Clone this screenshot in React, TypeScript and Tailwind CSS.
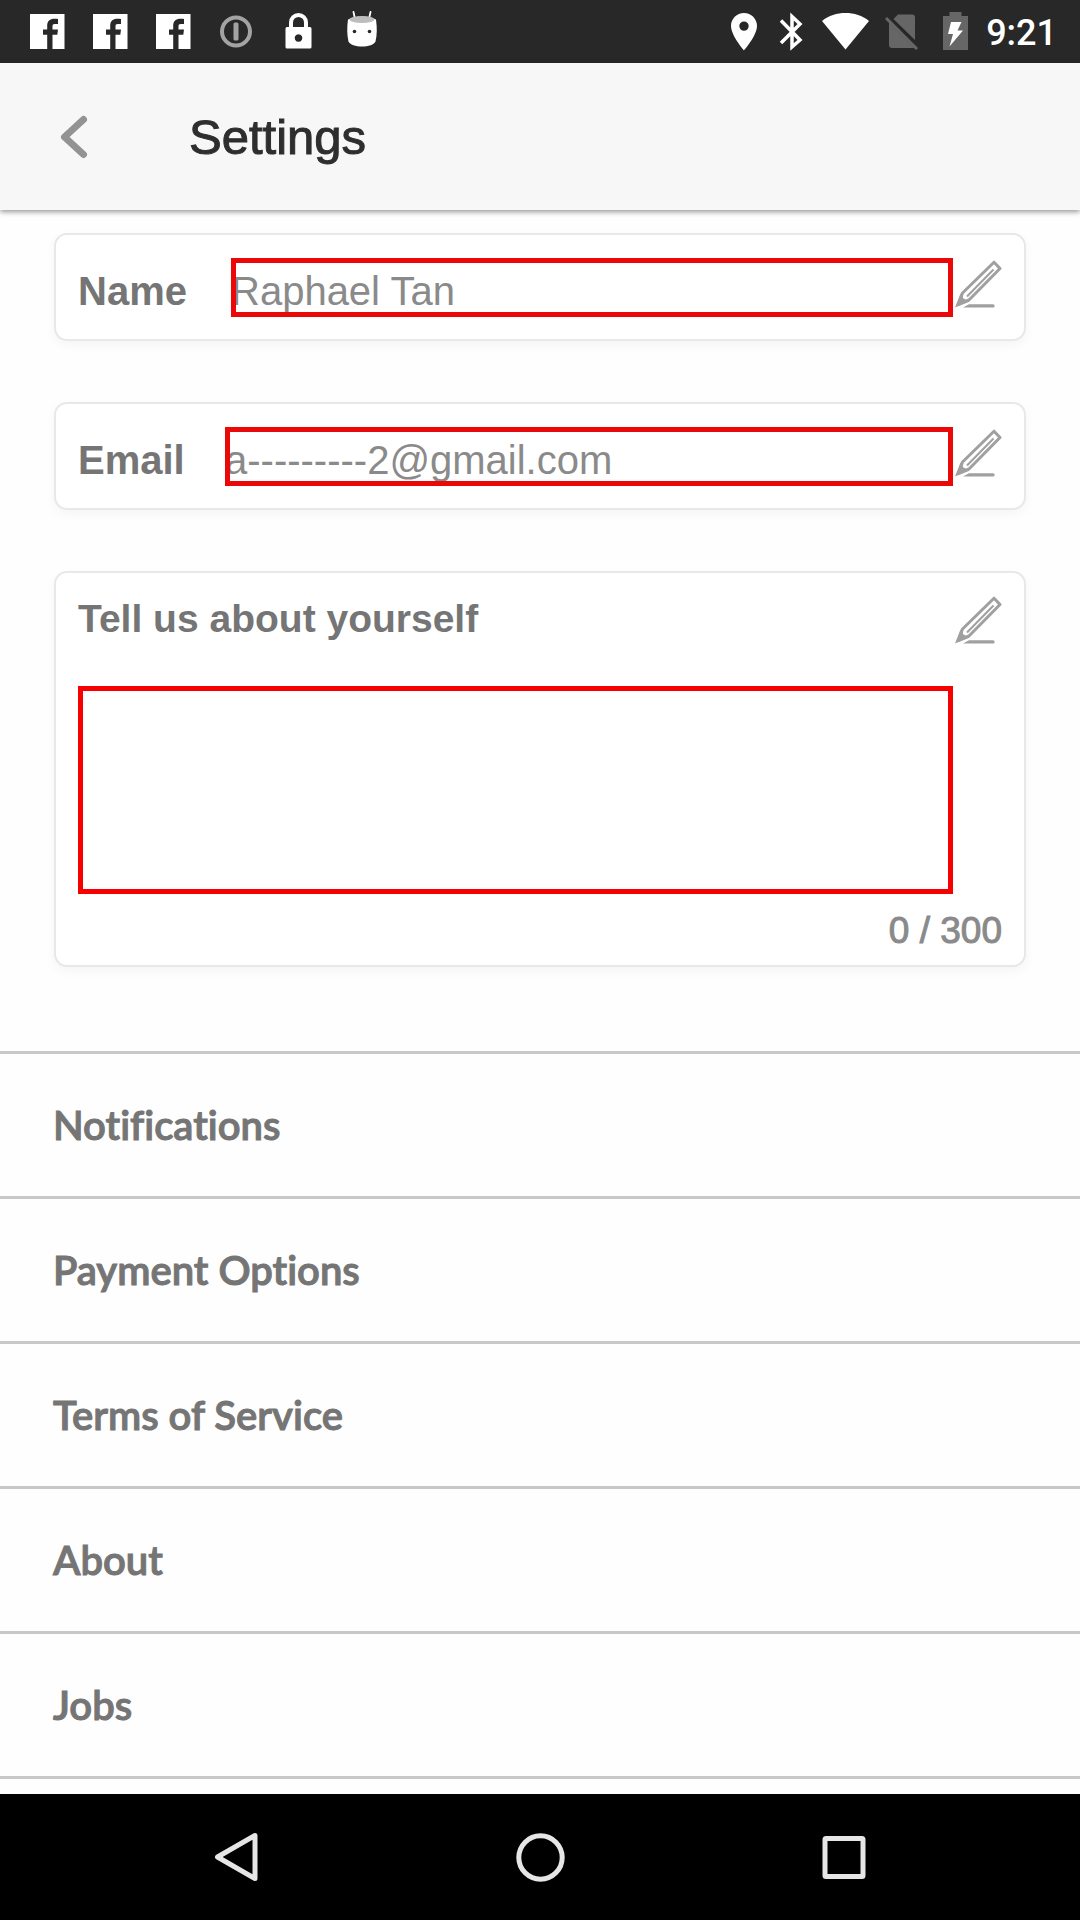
import { useState } from 'react';

function FacebookIcon() {
  return (
    <svg viewBox="0 0 63 63" className="h-[63px] w-[63px]" aria-hidden="true">
      <path fill="#fff" d="M15 14h34.500v35H37.500V34.800h4.800l.7-5.300h-5.500v-3.300c0-1.500.6-2.300 2.300-2.300h3.200v-5c-.8-.1-2-.2-3.400-.2-4.800 0-7.400 2.600-7.400 7v3.800h-4.200v5.300h4.200V49H15z" />
    </svg>
  );
}

function InfoCircleIcon() {
  return (
    <svg viewBox="0 0 63 63" className="h-[63px] w-[63px]" aria-hidden="true">
      <circle cx="32" cy="31.500" r="14" fill="none" stroke="#a3a3a3" strokeWidth="4" />
      <rect x="29.500" y="22.500" width="5" height="18" rx="1.500" fill="#a3a3a3" />
    </svg>
  );
}

function LockIcon() {
  return (
    <svg viewBox="0 0 63 63" className="h-[63px] w-[63px]" aria-hidden="true">
      <path d="M24 30v-7.500a7.500 7.500 0 0 1 15 0V30" fill="none" stroke="#fff" strokeWidth="4" />
      <path fillRule="evenodd" fill="#fff" d="M20 27h23q1.500 0 1.500 1.500V47q0 1.500-1.500 1.500H20q-1.500 0-1.500-1.500V28.500Q18.500 27 20 27zm11.500 7.200a3.800 3.800 0 1 0 .01 0z" />
    </svg>
  );
}

function AndroidHeadIcon() {
  return (
    <svg viewBox="0 0 63 63" className="h-[63px] w-[63px]" aria-hidden="true">
      <path d="M23.500 12l1.500 7M40.500 12l-1.500 7" stroke="#fff" strokeWidth="1.800" strokeLinecap="round" />
      <path d="M18 19.500c8-4 20-4 28 0 1.200 8 1 16-.5 22-1 3-7.500 5-13.500 5s-12.500-2-13.500-5c-1.500-6-1.700-14-.5-22z" fill="#fff" />
      <ellipse cx="32" cy="19.500" rx="12.500" ry="3.500" fill="#bdbdbd" />
      <circle cx="24.500" cy="31.500" r="1.800" fill="#282828" />
      <circle cx="39.500" cy="31.500" r="1.800" fill="#282828" />
    </svg>
  );
}

function PinIcon() {
  return (
    <svg viewBox="0 0 26 63" className="mr-[22px] h-[63px] w-[26px]" aria-hidden="true">
      <path fillRule="evenodd" fill="#fff" d="M13 13C5.800 13 0 18.800 0 26c0 9.500 13 24.500 13 24.500S26 35.500 26 26c0-7.200-5.800-13-13-13zm0 8.400a4.700 4.700 0 1 1 0 9.400 4.700 4.700 0 0 1 0-9.400z" />
    </svg>
  );
}

function BluetoothIcon() {
  return (
    <svg viewBox="0 0 24 63" className="mr-[19px] h-[63px] w-6" aria-hidden="true">
      <path d="M2 20.500L21 40 13 47V16.500L21 24 2 43" fill="none" stroke="#fff" strokeWidth="3.500" />
    </svg>
  );
}

function WifiIcon() {
  return (
    <svg viewBox="0 0 48 63" className="mr-[14px] h-[63px] w-12" aria-hidden="true">
      <path fill="#fff" d="M0 21C6.500 15.500 15 13 23.500 13S40.500 15.500 47 21L23.500 49.500z" />
    </svg>
  );
}

function NoSimIcon() {
  return (
    <svg viewBox="0 0 34 63" className="mr-[25px] h-[63px] w-[34px]" aria-hidden="true">
      <path fill="#666" d="M14 14.500h14q3 0 3 3V40L9.500 19zM5 22.500L30.500 48H8q-3 0-3-3z" />
      <path d="M2 18l31 31" stroke="#666" strokeWidth="3" />
    </svg>
  );
}

function BatteryIcon() {
  return (
    <svg viewBox="0 0 25 63" className="mr-[18px] h-[63px] w-[25px]" aria-hidden="true">
      <path fill="#666" d="M0 16h6.500v-4h12v4H25v34H0z" />
      <path fill="#fff" d="M8 22h10.500l-4 8.500H20L6.500 46.500l3.500-12.500H5z" />
    </svg>
  );
}

function StatusBar() {
  return (
    <div className="flex h-[63px] items-center justify-between bg-[#282828] pl-[15px] pr-[23px]">
      <div className="flex">
        <FacebookIcon />
        <FacebookIcon />
        <FacebookIcon />
        <InfoCircleIcon />
        <LockIcon />
        <AndroidHeadIcon />
      </div>
      <div className="flex items-center">
        <PinIcon />
        <BluetoothIcon />
        <WifiIcon />
        <NoSimIcon />
        <BatteryIcon />
        <span className="pt-[3px] font-['Roboto',sans-serif] text-[36px] font-medium leading-[60px] text-white">9:21</span>
      </div>
    </div>
  );
}

function Header() {
  return (
    <header className="flex h-[147px] items-center bg-[#f7f7f7] pl-[53px] shadow-[0_2px_5px_rgba(0,0,0,0.4)]">
      <button type="button" aria-label="Back" className="flex h-12 w-[136px] items-center">
        <svg viewBox="0 0 40 48" className="h-12 w-10" aria-hidden="true">
          <path d="M30.500 6.500L11.500 24l19 17.500" fill="none" stroke="#939393" strokeWidth="7" strokeLinecap="round" strokeLinejoin="round" />
        </svg>
      </button>
      <h1 className="text-[49px] leading-[60px] text-[#2e2e2e] [-webkit-text-stroke:1px_#2e2e2e]">Settings</h1>
    </header>
  );
}

function EditButton({ label }: { label: string }) {
  return (
    <button type="button" aria-label={label} className="ml-[2px] h-[59px] w-[47px] shrink-0">
      <svg viewBox="0 0 47 59" className="h-[59px] w-[47px]" aria-hidden="true">
        <path d="M39 4.200L45 10.500 14.500 41.500 3.500 46.500 7.500 35z" fill="none" stroke="#a0a0a0" strokeWidth="3" strokeLinejoin="round" />
        <path d="M12 38.500L38.500 11.500" stroke="#a0a0a0" strokeWidth="2" />
        <path d="M0 49.500L5.500 35.500 8.500 40.500 15 43.500z" fill="#a0a0a0" />
        <path d="M8 49.500l6-3.200h24q1.700 0 1.700 1.600t-1.700 1.600z" fill="#a0a0a0" />
      </svg>
    </button>
  );
}

type FieldProps = { id: string; label: string; labelClass: string; type: string; initial: string };

function FieldCard({ id, label, labelClass, type, initial }: FieldProps) {
  const [value, setValue] = useState(initial);
  return (
    <div className="flex rounded-[13px] border-2 border-[#e8e8e8] bg-white px-[22px] pb-[22px] pt-[23px] shadow-[0_4px_12px_rgba(0,0,0,0.04)]">
      <label htmlFor={id} className={`${labelClass} shrink-0 pt-[7px] text-[40px] font-bold leading-[52px] text-[#757575]`}>
        {label}
      </label>
      <input
        id={id}
        type={type}
        value={value}
        onChange={(e) => setValue(e.target.value)}
        className="h-[59px] min-w-0 flex-1 pt-[7px] text-[40px] leading-[52px] text-[#8a8a8a] outline-[5px] -outline-offset-[5px] outline-[#eb0808] outline-solid"
      />
      <EditButton label={`Edit ${label.toLowerCase()}`} />
    </div>
  );
}

function AboutCard() {
  const [text, setText] = useState('');
  return (
    <div className="rounded-[13px] border-2 border-[#e8e8e8] bg-white px-[22px] pb-3 pt-[21px] shadow-[0_4px_12px_rgba(0,0,0,0.04)]">
      <div className="flex items-start justify-between">
        <label htmlFor="about" className="text-[39px] font-bold leading-[49px] text-[#757575]">
          Tell us about yourself
        </label>
        <EditButton label="Edit description" />
      </div>
      <div className="mt-[33px] flex pr-[49px]">
        <textarea
          id="about"
          maxLength={300}
          value={text}
          onChange={(e) => setText(e.target.value)}
          className="h-[208px] flex-1 resize-none border-[5px] border-[#f60000] text-[40px] text-[#8a8a8a] outline-none"
        />
      </div>
      <p className="mt-[15px] text-right text-[37px] leading-[44px] text-[#8a8a8a] [-webkit-text-stroke:1px_#8a8a8a]">
        {text.length} / 300
      </p>
    </div>
  );
}

const links = ['Notifications', 'Payment Options', 'Terms of Service', 'About', 'Jobs'];

function NavBar() {
  return (
    <nav className="mt-auto flex h-[126px] items-center justify-center gap-[239px] bg-black">
      <button type="button" aria-label="Back">
        <svg viewBox="0 0 64 64" className="h-16 w-16" aria-hidden="true">
          <path d="M50 10.500v43L12.500 32z" fill="none" stroke="#e6e6e6" strokeWidth="5" strokeLinejoin="round" />
        </svg>
      </button>
      <button type="button" aria-label="Home">
        <svg viewBox="0 0 64 64" className="h-16 w-16" aria-hidden="true">
          <circle cx="32.500" cy="32.500" r="21.700" fill="none" stroke="#e6e6e6" strokeWidth="5" />
        </svg>
      </button>
      <button type="button" aria-label="Recent apps">
        <svg viewBox="0 0 64 64" className="h-16 w-16" aria-hidden="true">
          <rect x="14" y="13.500" width="38" height="38" rx="1" fill="none" stroke="#e6e6e6" strokeWidth="5" />
        </svg>
      </button>
    </nav>
  );
}

export default function App() {
  return (
    <div className="flex min-h-screen flex-col bg-[#fefefe] font-['Liberation_Sans',Arial,sans-serif]">
      <StatusBar />
      <Header />
      <main>
        <form className="flex flex-col gap-[61px] px-[54px] pt-[23px]">
          <FieldCard id="name" label="Name" labelClass="w-[153px]" type="text" initial="Raphael Tan" />
          <FieldCard id="email" label="Email" labelClass="w-[147px]" type="email" initial="a---------2@gmail.com" />
          <AboutCard />
        </form>
        <ul className="mt-[84px] border-b-[3px] border-[#c8c8c8]">
          {links.map((name) => (
            <li key={name} className="border-t-[3px] border-[#c8c8c8]">
              <a
                href="#"
                className="block py-[46px] pl-[53px] font-['Lato',sans-serif] text-[40px] font-semibold leading-[50px] text-[#757575] [-webkit-text-stroke:1px_#757575] [font-variant-ligatures:none]"
              >
                {name}
              </a>
            </li>
          ))}
        </ul>
      </main>
      <NavBar />
    </div>
  );
}
